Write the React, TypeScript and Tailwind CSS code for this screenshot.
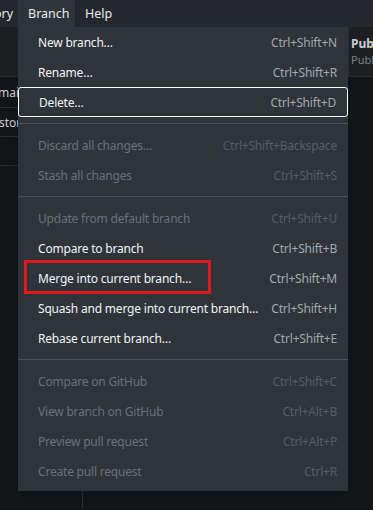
import React from "react";

type Item =
  | { kind: "item"; label: string; shortcut: string; disabled?: boolean; focused?: boolean; marked?: boolean }
  | { kind: "sep" };

const items: Item[] = [
  { kind: "item", label: "New branch…", shortcut: "Ctrl+Shift+N" },
  { kind: "item", label: "Rename…", shortcut: "Ctrl+Shift+R" },
  { kind: "item", label: "Delete…", shortcut: "Ctrl+Shift+D", focused: true },
  { kind: "sep" },
  { kind: "item", label: "Discard all changes…", shortcut: "Ctrl+Shift+Backspace", disabled: true },
  { kind: "item", label: "Stash all changes", shortcut: "Ctrl+Shift+S", disabled: true },
  { kind: "sep" },
  { kind: "item", label: "Update from default branch", shortcut: "Ctrl+Shift+U", disabled: true },
  { kind: "item", label: "Compare to branch", shortcut: "Ctrl+Shift+B" },
  { kind: "item", label: "Merge into current branch…", shortcut: "Ctrl+Shift+M", marked: true },
  { kind: "item", label: "Squash and merge into current branch…", shortcut: "Ctrl+Shift+H" },
  { kind: "item", label: "Rebase current branch…", shortcut: "Ctrl+Shift+E" },
  { kind: "sep" },
  { kind: "item", label: "Compare on GitHub", shortcut: "Ctrl+Shift+C", disabled: true },
  { kind: "item", label: "View branch on GitHub", shortcut: "Ctrl+Alt+B", disabled: true },
  { kind: "item", label: "Preview pull request", shortcut: "Ctrl+Alt+P", disabled: true },
  { kind: "item", label: "Create pull request", shortcut: "Ctrl+R", disabled: true },
];

export default function App() {
  return (
    <div
      className="relative w-[373px] h-[510px] overflow-hidden bg-[#141518] text-[12px]"
      style={{ fontFamily: '"Noto Sans", "Open Sans", sans-serif' }}
    >
      {/* menu bar */}
      <div className="flex h-[27px] bg-[#24272b] text-[#e8eaed] text-[12.5px] leading-[27px]">
        <div className="w-[18px] overflow-hidden whitespace-nowrap">
          <span className="-ml-[29px] inline-block">History</span>
        </div>
        <div className="w-[57px] bg-[#2f343b] pl-[10px]">Branch</div>
        <div className="pl-[10px]">Help</div>
      </div>

      {/* app behind the menu */}
      <div className="flex h-[50px] bg-[#1d1f23] border-b border-[#2b2e33]">
        <div className="flex-1" />
        <div className="w-[25px] pl-[2px] pt-[9px] border-l border-[#2b2e33] overflow-hidden whitespace-nowrap">
          <div className="font-bold text-[#c9ccd1] leading-[16px]">Publish branch</div>
          <div className="text-[#7d828a] text-[11px] leading-[16px]">Publish this branch</div>
        </div>
      </div>
      <div className="flex h-[calc(510px-78px)]">
        <div className="w-[83px] border-r border-[#2b2e33] text-[#c9ccd1]">
          <div className="h-[31px] leading-[31px] border-b border-[#2b2e33] whitespace-nowrap overflow-hidden">
            <span className="-ml-[2px] inline-block">main</span>
          </div>
          <div className="h-[29px] leading-[29px] border-b border-[#2b2e33] whitespace-nowrap overflow-hidden">
            <span className="-ml-[13px] inline-block">History</span>
          </div>
          <div className="h-[29px] border-b border-[#2b2e33]" />
        </div>
        <div className="flex-1" />
      </div>

      {/* dropdown */}
      <div className="absolute left-[18px] top-[27px] w-[330px] bg-[#2f343b] pb-[5px] shadow-lg tracking-[-0.2px]">
        {items.map((it, i) =>
          it.kind === "sep" ? (
            <div key={i} className="h-[13px] flex items-center">
              <div className="h-px w-full bg-[#4b5058]" />
            </div>
          ) : (
            <div
              key={i}
              className={`relative flex h-[30px] items-center justify-between pl-[20px] pr-[11px] pt-[1px] ${
                it.focused ? "border border-white rounded-[3px] pl-[19px] pr-[10px]" : ""
              }`}
            >
              <span className={it.disabled ? "text-[#6b7079]" : "text-[#f1f3f5]"}>{it.label}</span>
              <span className={it.disabled ? "text-[#575c64]" : "text-[#a3a8ae]"}>{it.shortcut}</span>
              {it.marked && (
                <div className="absolute left-[6px] top-[-3px] w-[187px] h-[34px] border-[3px] border-[#e0191c]" />
              )}
            </div>
          )
        )}
      </div>
    </div>
  );
}
